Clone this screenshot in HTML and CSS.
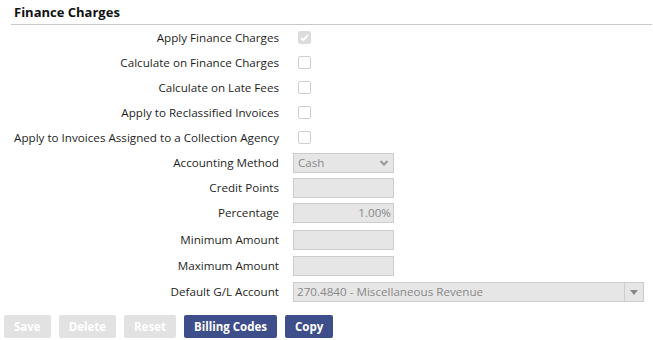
FILE: index.html
```html
<!DOCTYPE html>
<html>
<head>
<meta charset="utf-8">
<link rel="stylesheet" href="styles.css">
</head>
<body>
<div class="panel">
  <h2 class="title">Finance Charges</h2>
  <div class="form">
    <label class="lbl">Apply Finance Charges</label>
    <div class="ctl"><span class="cb checked"><svg viewBox="0 0 13 13" width="13" height="13"><path d="M3 6.8 L5.4 9.2 L10 3.8" fill="none" stroke="#fff" stroke-width="1.8"/></svg></span></div>

    <label class="lbl">Calculate on Finance Charges</label>
    <div class="ctl"><span class="cb"></span></div>

    <label class="lbl">Calculate on Late Fees</label>
    <div class="ctl"><span class="cb"></span></div>

    <label class="lbl">Apply to Reclassified Invoices</label>
    <div class="ctl"><span class="cb"></span></div>

    <label class="lbl">Apply to Invoices Assigned to a Collection Agency</label>
    <div class="ctl"><span class="cb"></span></div>

    <label class="lbl">Accounting Method</label>
    <div class="ctl"><div class="field sel">Cash<svg class="chev" viewBox="0 0 10 8" width="10" height="8"><path d="M1.5 2 L5 5.5 L8.5 2" fill="none" stroke="#999" stroke-width="2"/></svg></div></div>

    <label class="lbl">Credit Points</label>
    <div class="ctl"><div class="field"></div></div>

    <label class="lbl r26">Percentage</label>
    <div class="ctl r26"><div class="field num">1.00%</div></div>

    <label class="lbl r27">Minimum Amount</label>
    <div class="ctl r27"><div class="field"></div></div>

    <label class="lbl r26">Maximum Amount</label>
    <div class="ctl r26"><div class="field"></div></div>

    <label class="lbl r26">Default G/L Account</label>
    <div class="ctl r26"><div class="field wide"><span class="val">270.4840 - Miscellaneous Revenue</span><span class="drop"><svg viewBox="0 0 8 5" width="8" height="5"><path d="M0 0 H8 L4 5 Z" fill="#888"/></svg></span></div></div>
  </div>
  <div class="buttons">
    <button class="btn off">Save</button>
    <button class="btn off">Delete</button>
    <button class="btn off">Reset</button>
    <button class="btn on">Billing Codes</button>
    <button class="btn on">Copy</button>
  </div>
</div>
</body>
</html>
```
FILE: styles.css
```css
html, body {
  margin: 0;
  padding: 0;
  background: #fff;
}
body {
  font-family: "Open Sans", "Noto Sans", sans-serif;
  font-size: 11.65px;
  color: #1e1e1e;
}
.panel {
  padding: 0 1px 0 11px;
}
.title {
  margin: 0;
  padding: 4px 0 3px 3px;
  font-size: 13px;
  font-weight: bold;
  line-height: 17px;
  color: #111;
  border-bottom: 1px solid #c8c8c8;
}
.form {
  display: grid;
  grid-template-columns: 268px 1fr;
  column-gap: 14px;
  padding-top: 0;
}
.lbl {
  text-align: right;
  height: 25px;
  line-height: 25px;
  white-space: nowrap;
}
.ctl {
  height: 25px;
  display: flex;
  align-items: center;
}
.lbl.r26, .ctl.r26 {
  height: 26px;
  line-height: 26px;
}
.lbl.r27, .ctl.r27 {
  height: 27px;
  line-height: 27px;
}
.cb {
  box-sizing: border-box;
  width: 13px;
  height: 13px;
  margin-left: 5px;
  border: 1px solid #cfcfcf;
  border-radius: 2px;
  background: #fff;
  display: flex;
}
.cb.checked {
  background: #dcdcdc;
  border-color: #dcdcdc;
}
.cb svg {
  margin: -1px;
}
.field {
  box-sizing: border-box;
  width: 101px;
  height: 20px;
  border: 1px solid #cccccc;
  background: #e6e6e6;
  color: #888;
  padding: 0 4px;
  line-height: 18px;
  display: flex;
  align-items: center;
}
.field.sel {
  justify-content: space-between;
}
.field.num {
  justify-content: flex-end;
  padding-right: 2px;
}
.field.wide {
  width: 351px;
  padding: 0 0 0 3px;
  justify-content: space-between;
}
.drop {
  width: 18px;
  height: 18px;
  border-left: 1px solid #cccccc;
  display: flex;
  align-items: center;
  justify-content: center;
}
.buttons {
  display: flex;
  gap: 8px;
  padding: 10px 0 0 0;
  margin-left: -7px;
}
.btn {
  font-family: "Open Sans", "Noto Sans", sans-serif;
  font-weight: bold;
  font-size: 11.5px;
  height: 23px;
  padding: 0 10px;
  border: none;
  border-radius: 2px;
  color: #fff;
}
.btn.off {
  background: #e2e2e2;
}
.btn.on {
  background: #3d4e8a;
}
```
